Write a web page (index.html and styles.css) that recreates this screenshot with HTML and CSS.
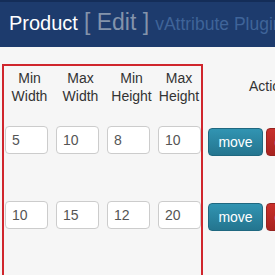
FILE: index.html
```html
<!DOCTYPE html>
<html lang="en">
<head>
    <meta charset="UTF-8">
    <meta name="viewport" content="width=device-width, initial-scale=1.0">
    <title>Product Edit - vAttribute Plugin</title>
    <link rel="stylesheet" href="styles.css">
</head>
<body>

    <header class="topbar">
        <span class="title">Product</span>
        <span class="mode">[ Edit ]</span>
        <span class="plugin">vAttribute Plugin</span>
    </header>

    <main class="content">
        <div class="sizes">
            <div class="head">Min<br>Width</div>
            <div class="head">Max<br>Width</div>
            <div class="head">Min<br>Height</div>
            <div class="head">Max<br>Height</div>

            <div class="cell"><input type="text" value="5"></div>
            <div class="cell"><input type="text" value="10"></div>
            <div class="cell"><input type="text" value="8"></div>
            <div class="cell"><input type="text" value="10"></div>

            <div class="cell"><input type="text" value="10"></div>
            <div class="cell"><input type="text" value="15"></div>
            <div class="cell"><input type="text" value="12"></div>
            <div class="cell"><input type="text" value="20"></div>
        </div>

        <div class="actions">
            <div class="actions-head">Action</div>
            <div class="action-row">
                <button class="btn btn-move">move</button>
                <button class="btn btn-delete">delete</button>
            </div>
            <div class="action-row">
                <button class="btn btn-move">move</button>
                <button class="btn btn-delete">delete</button>
            </div>
        </div>
    </main>

</body>
</html>
```

FILE: styles.css
```css
body {
    margin: 0;
    font-family: "Liberation Sans", Arial, Helvetica, sans-serif;
    background-color: #f6f6f6;
    color: #333;
    overflow: hidden;
}

.topbar {
    height: 47px;
    box-sizing: border-box;
    border-top: 2px solid #142d58;
    background-color: #1d3b6d;
    display: flex;
    align-items: baseline;
    gap: 6px;
    padding: 7px 0 0 9px;
    white-space: nowrap;
    overflow: hidden;
}

.title {
    font-size: 20px;
    color: #fff;
}

.mode {
    font-size: 23px;
    color: #8393ab;
}

.plugin {
    font-size: 17.5px;
    color: #3f6499;
}

.content {
    display: flex;
    align-items: flex-start;
    padding: 17px 0 0 2px;
}

/* highlighted size columns */
.sizes {
    width: 197px;
    min-height: 260px;
    border: 2px solid #d0262d;
    border-bottom: none;
    display: grid;
    grid-template-columns: 51px 51px 51px 44px;
    grid-template-rows: 40px 75px 75px;
    align-content: start;
}

.head {
    font-size: 14px;
    line-height: 18px;
    padding-top: 3px;
    text-align: center;
    color: #333;
    white-space: nowrap;
}

.cell {
    padding: 20px 0 0 1px;
}

.cell input {
    width: 43px;
    height: 28px;
    box-sizing: border-box;
    border: 1px solid #ccc;
    border-radius: 4px;
    background: #fff;
    padding: 0 6px;
    font-family: inherit;
    font-size: 14px;
    color: #555;
}

.actions {
    margin-left: 5px;
    padding-top: 2px;
    flex: 1;
    white-space: nowrap;
}

.actions-head {
    height: 40px;
    line-height: 40px;
    padding-left: 41px;
    font-size: 14px;
}

.action-row {
    height: 75px;
    box-sizing: border-box;
    padding-top: 22px;
    display: flex;
    gap: 3px;
}

.btn {
    height: 28px;
    padding: 0;
    border-radius: 4px;
    font-family: inherit;
    font-size: 14px;
    color: #fff;
    cursor: pointer;
}

.btn-move {
    width: 55px;
    background: linear-gradient(#3194b2, #24758f);
    border: 1px solid #1f6880;
}

.btn-delete {
    width: 55px;
    background: linear-gradient(#c9302c, #a8231f);
    border: 1px solid #952320;
}
```
